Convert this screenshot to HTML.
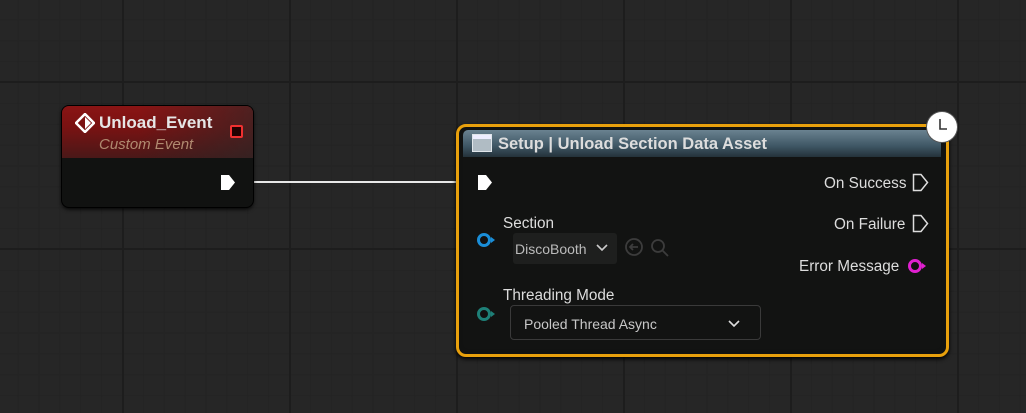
<!DOCTYPE html>
<html><head><style>
body{margin:0;width:1026px;height:413px;overflow:hidden;font-family:"Liberation Sans",sans-serif;
background-color:#262626;
background-image:
linear-gradient(90deg,#1d1d1d 2px,transparent 2px),
linear-gradient(0deg,#1d1d1d 2px,transparent 2px),
linear-gradient(90deg,#232323 1px,transparent 1px),
linear-gradient(0deg,#232323 1px,transparent 1px);
background-size:167px 167px,167px 167px,20.875px 20.875px,20.875px 20.875px;
background-position:122px 0,0 83px,122px 0,0 83px;position:relative}
.abs{position:absolute}
.t{color:#ddd;font-size:15.3px}
</style></head><body>
<div class="abs" style="left:236px;top:181px;width:226px;height:2px;background:#e8e8e8"></div>

<div class="abs" style="left:62px;top:106px;width:191px;height:101px;border-radius:7px;background:#111211;box-shadow:0 0 0 1px #000,0 2px 4px #000;overflow:hidden">
 <div style="height:52px;background:linear-gradient(180deg,#8a1414 0%,#7a1212 40%,#4a1818 100%);position:relative">
  <div style="position:absolute;left:0;right:0;top:0;height:52px;background:linear-gradient(90deg,rgba(0,0,0,0) 40%,rgba(40,40,40,.6) 100%)"></div>
  <svg class="abs" style="left:13px;top:7px" width="20" height="20" viewBox="0 0 20 20"><path d="M10 1 L19 10 L10 19 L1 10Z" fill="none" stroke="#fff" stroke-width="2.5"/><path d="M10 4 L16 10 L10 16Z" fill="#fff"/></svg>
  <div class="abs" style="left:37px;top:7px;color:#e6e6e6;font-weight:bold;font-size:17px">Unload_Event</div>
  <div class="abs" style="left:37px;top:30px;color:#b08a70;font-style:italic;font-size:15px">Custom Event</div>
  <div class="abs" style="left:168px;top:19px;width:9px;height:9px;border:2px solid #f03030;border-radius:2px;background:#200"></div>
 </div>
</div>
<svg class="abs" style="left:219px;top:174px" width="18" height="18"><path d="M2 1 H10 L16 8.5 L10 16 H2Z" fill="#fff"/></svg>

<div class="abs" style="left:456px;top:124px;width:487px;height:227px;border:3px solid #e8a00c;border-radius:10px;background:#111211;box-shadow:0 2px 4px #000"></div>
<div class="abs" style="left:463px;top:130px;width:478px;height:219px;border-radius:5px;overflow:hidden;background:#121312">
 <div style="height:27px;background:linear-gradient(180deg,#6a8290 0%,#3e5664 60%,#24323a 100%)"></div>
</div>
<div class="abs" style="left:472px;top:134px;width:20px;height:18px;background:#b0bcc4;border:1px solid #e0e6ea;box-sizing:border-box"><div style="height:4px;background:#eef"></div></div>
<div class="abs" style="left:498px;top:135px;color:#ddd;font-weight:bold;font-size:16.5px">Setup | Unload Section Data Asset</div>
<div class="abs" style="left:927px;top:112px;width:30px;height:30px;border-radius:50%;background:#fff;box-shadow:0 0 0 1px #555"></div>
<svg class="abs" style="left:927px;top:112px" width="30" height="30"><path d="M13 7 V17 H20" fill="none" stroke="#333" stroke-width="1.6"/></svg>

<svg class="abs" style="left:476px;top:174px" width="18" height="18"><path d="M2 1 H10 L16 8.5 L10 16 H2Z" fill="#fff"/></svg>
<div class="abs t" style="left:824px;top:175px">On Success</div>
<svg class="abs" style="left:912px;top:173px" width="18" height="20"><path d="M1.5 1.5 H9 L15.5 9.5 L9 17.5 H1.5Z" fill="none" stroke="#ddd" stroke-width="1.5"/></svg>
<div class="abs t" style="left:834px;top:216px">On Failure</div>
<svg class="abs" style="left:912px;top:214px" width="18" height="20"><path d="M1.5 1.5 H9 L15.5 9.5 L9 17.5 H1.5Z" fill="none" stroke="#ddd" stroke-width="1.5"/></svg>
<div class="abs t" style="left:799px;top:258px">Error Message</div>
<svg class="abs" style="left:907px;top:257px" width="22" height="18"><circle cx="8" cy="9" r="5.5" fill="#111" stroke="#e020d0" stroke-width="3"/><path d="M15 6 L19 9 L15 12Z" fill="#e020d0"/></svg>

<div class="abs t" style="left:503px;top:215px">Section</div>
<svg class="abs" style="left:476px;top:231px" width="22" height="18"><circle cx="8" cy="9" r="5.5" fill="#111" stroke="#1a8ed8" stroke-width="3"/><path d="M15 6 L19 9 L15 12Z" fill="#1a8ed8"/></svg>
<div class="abs" style="left:513px;top:233px;width:104px;height:31px;border-radius:3px;background:#1e1f1e"></div>
<div class="abs" style="left:515px;top:241px;color:#bbb;font-size:14px">DiscoBooth</div>
<svg class="abs" style="left:595px;top:241px" width="14" height="14"><path d="M2 4 L7 9 L12 4" fill="none" stroke="#ccc" stroke-width="1.6"/></svg>
<svg class="abs" style="left:623px;top:236px" width="50" height="24"><circle cx="11" cy="11" r="8" fill="none" stroke="#3c3c3c" stroke-width="1.8"/><path d="M15 11 H7 M10 8 L7 11 L10 14" fill="none" stroke="#3c3c3c" stroke-width="1.8"/><circle cx="35" cy="10" r="6" fill="none" stroke="#3c3c3c" stroke-width="1.8"/><path d="M39.5 14.5 L45 20" stroke="#3c3c3c" stroke-width="1.8"/></svg>

<div class="abs t" style="left:503px;top:287px">Threading Mode</div>
<svg class="abs" style="left:476px;top:305px" width="22" height="18"><circle cx="8" cy="9" r="5.5" fill="#111" stroke="#1e8078" stroke-width="3"/><path d="M15 6 L19 9 L15 12Z" fill="#1e8078"/></svg>
<div class="abs" style="left:510px;top:305px;width:251px;height:35px;border:1px solid #3a3a3a;border-radius:4px;box-sizing:border-box;background:#121312"></div>
<div class="abs" style="left:524px;top:316px;color:#c8c8c8;font-size:14px">Pooled Thread Async</div>
<svg class="abs" style="left:727px;top:317px" width="14" height="14"><path d="M2 4 L7 9 L12 4" fill="none" stroke="#ddd" stroke-width="1.6"/></svg>
</body></html>
